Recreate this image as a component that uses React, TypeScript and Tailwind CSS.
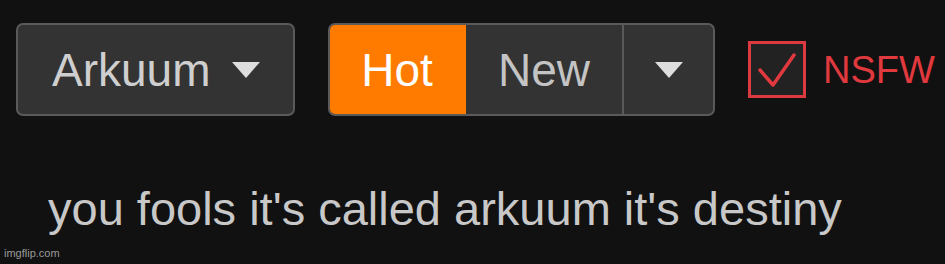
export default function App() {
  return (
    <div
      className="relative h-[264px] w-[945px] overflow-hidden bg-[#111111] pl-4 pt-[23px]"
      style={{ fontFamily: '"Liberation Sans", Arial, sans-serif' }}
    >
      <div className="flex h-[93px] items-center">
        <button
          type="button"
          className="flex h-[93px] w-[279px] items-center rounded-[7px] border-2 border-[#5a5a5a] bg-[#333333] pl-[34px] text-[46px] text-[#cfcfcf]"
        >
          <span className="leading-none">Arkuum</span>
          <Caret className="ml-[21px]" />
        </button>

        <div className="ml-[33px] flex h-[93px] w-[387px] overflow-hidden rounded-[7px] border-2 border-[#5a5a5a] bg-[#333333] text-[46px]">
          <div className="-my-[2px] -ml-[2px] flex w-[138px] items-center justify-center bg-[#ff7b00] text-white">
            <span className="leading-none">Hot</span>
          </div>
          <div className="flex w-[158px] items-center justify-center border-r-2 border-[#5a5a5a] text-[#c4c4c4]">
            <span className="leading-none">New</span>
          </div>
          <div className="flex flex-1 items-center justify-center">
            <Caret />
          </div>
        </div>

        <label className="ml-[33px] flex items-center">
          <span className="flex h-[57px] w-[58px] items-center justify-center border-[3px] border-[#dc3a40] bg-[#222222]">
            <svg viewBox="0 0 52 51" className="h-[51px] w-[52px]" fill="none">
              <path d="M9 26l13 15 21-30" stroke="#e2393f" strokeWidth="3.5" strokeLinecap="round" strokeLinejoin="round" />
            </svg>
          </span>
          <span className="ml-[17px] text-[38px] leading-none text-[#e0393e]">NSFW</span>
        </label>
      </div>

      <p className="mt-[66px] pl-[32px] text-[47px] leading-[54px] text-[#c8c8c8]">
        you fools it's called arkuum it's destiny
      </p>

      <span className="absolute bottom-[3px] left-[4px] text-[11px] text-[#9a9a9a]">imgflip.com</span>
    </div>
  )
}

function Caret({ className = '' }: { className?: string }) {
  return (
    <svg viewBox="0 0 30 18" className={`h-[18px] w-[30px] ${className}`}>
      <path d="M1 1h28L15 17z" fill="#dedede" />
    </svg>
  )
}
